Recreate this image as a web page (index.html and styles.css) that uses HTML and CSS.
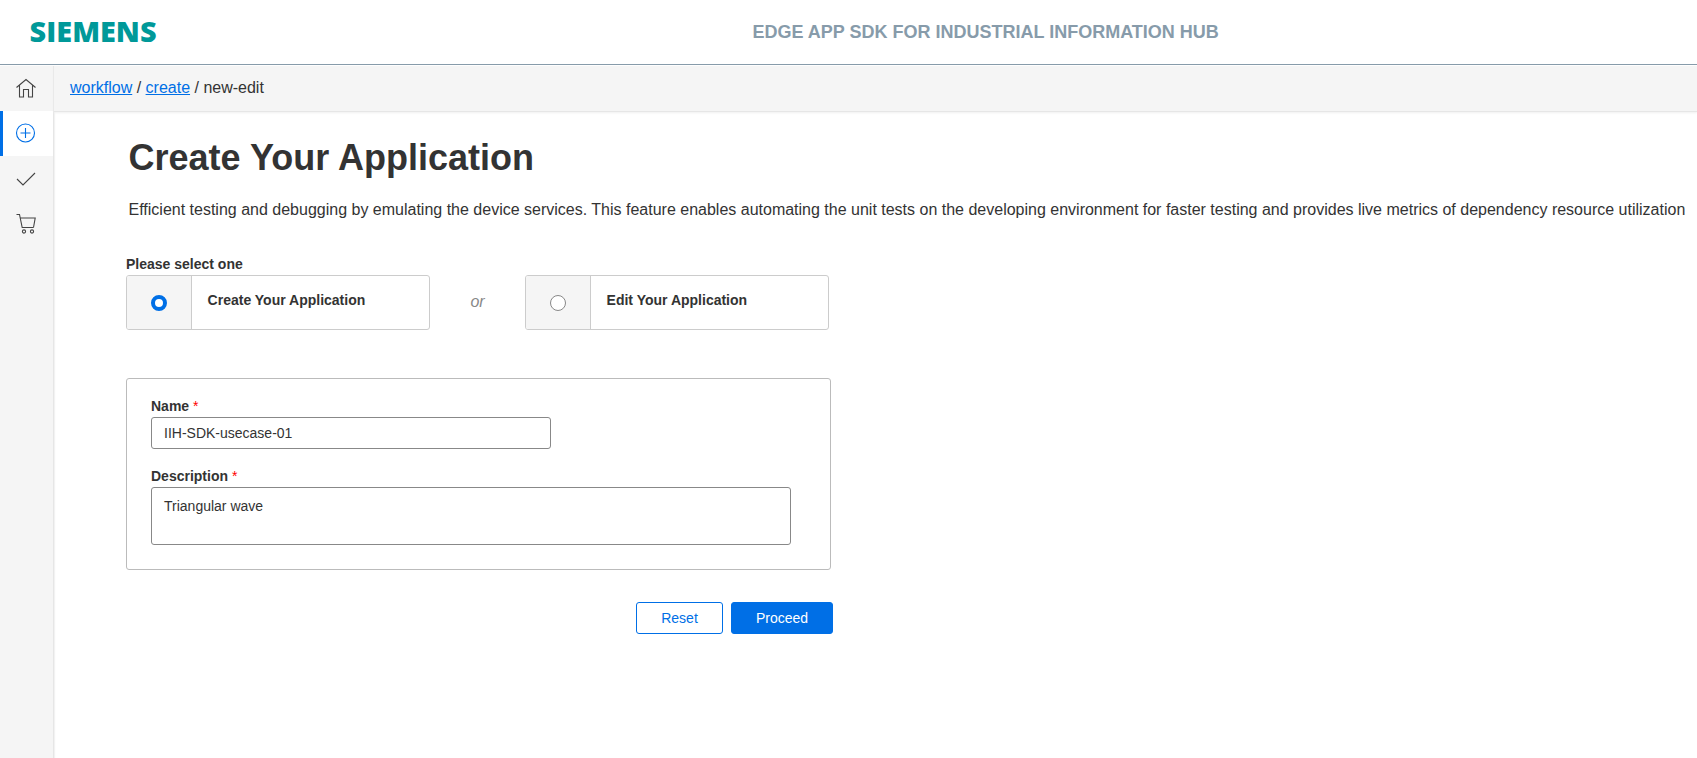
FILE: index.html
```html
<!DOCTYPE html>
<html lang="en">
<head>
<meta charset="utf-8">
<title>Edge App SDK for Industrial Information Hub</title>
<link rel="stylesheet" href="styles.css">
</head>
<body>
<header class="header">
  <svg class="logo" width="130" height="44" viewBox="0 0 130 44"><text class="logo-text" x="0.600" y="32" textLength="127" lengthAdjust="spacingAndGlyphs">SIEMENS</text></svg>
  <div class="header-title">EDGE APP SDK FOR INDUSTRIAL INFORMATION HUB</div>
</header>
<div class="shell">
  <nav class="sidebar">
    <a class="nav-item"><svg class="icon" viewBox="0 0 20 20"><path d="M.5 9.500 10 1.500l9.500 8M3.500 7.500v11.500h4v-7.500h5v7.500h4v-11.500"/></svg></a>
    <a class="nav-item active"><svg class="icon" viewBox="0 0 20 20"><circle cx="9.500" cy="10" r="9"/><path d="M9.500 5v10M4.500 10h10"/></svg></a>
    <a class="nav-item"><svg class="icon" viewBox="0 0 20 20"><path d="M1 11l6 6L19 5"/></svg></a>
    <a class="nav-item"><svg class="icon" viewBox="0 0 20 20"><path d="M.5 1.500h3l2.700 13h11.300M4.200 5h15l-1.700 9.500"/><circle cx="8" cy="18.500" r="1.600"/><circle cx="16" cy="18.500" r="1.600"/></svg></a>
  </nav>
  <main class="main">
    <div class="breadcrumb"><a class="link">workflow</a> / <a class="link">create</a> / new-edit</div>
    <div class="content">
      <h1 class="title">Create Your Application</h1>
      <p class="intro">Efficient testing and debugging by emulating the device services. This feature enables automating the unit tests on the developing environment for faster testing and provides live metrics of dependency resource utilization</p>
      <div class="label">Please select one</div>
      <div class="choices">
        <div class="choice"><div class="choice-mark"><span class="radio checked"></span></div><div class="choice-text">Create Your Application</div></div>
        <div class="or">or</div>
        <div class="choice"><div class="choice-mark"><span class="radio"></span></div><div class="choice-text">Edit Your Application</div></div>
      </div>
      <form class="panel">
        <div class="label">Name <span class="required">*</span></div>
        <input class="field name" value="IIH-SDK-usecase-01">
        <div class="label">Description <span class="required">*</span></div>
        <textarea class="field description">Triangular wave</textarea>
      </form>
      <div class="actions">
        <button class="button">Reset</button>
        <button class="button primary">Proceed</button>
      </div>
    </div>
  </main>
</div>
</body>
</html>
```
FILE: styles.css
```css
* { box-sizing: border-box; }
body {
  margin: 0;
  height: 758px;
  overflow: hidden;
  font: 14px/16px "Liberation Sans", Arial, sans-serif;
  color: #333;
  background: #fff;
}
.header {
  display: flex;
  align-items: center;
  height: 65px;
  padding-left: 29px;
  border-bottom: 1px solid #879baa;
}
.logo { display: block; overflow: visible; }
.logo-text {
  font: 800 28px "Open Sans", "Noto Sans", sans-serif;
  fill: #099;
}
.header-title {
  margin-left: 593.500px;
  font-size: 18px;
  line-height: 20px;
  font-weight: bold;
  color: #879baa;
  white-space: nowrap;
}
.shell { display: flex; height: 692px; margin-top: 1px; }
.sidebar {
  width: 54px;
  flex: none;
  background: #f5f5f5;
  border-right: 1px solid #e6e6e6;
  box-shadow: 1px 0 1px #f2f2f2;
}
.nav-item {
  display: flex;
  align-items: center;
  height: 45px;
  padding: 0 0 2px 16px;
  color: #444;
}
.nav-item.active {
  padding-left: 13px;
  border-left: 3px solid #006fe6;
  background: #fff;
  color: #006fe6;
}
.icon {
  width: 20px;
  height: 20px;
  overflow: visible;
  fill: none;
  stroke: currentColor;
  stroke-width: 1.1;
}
.main { flex: 1; min-width: 0; }
.breadcrumb {
  height: 46px;
  padding: 12px 16px;
  font-size: 16px;
  line-height: 20px;
  background: #f5f5f5;
  border-bottom: 1px solid #e6e6e6;
  box-shadow: 0 1px 2px #f0f0f0;
}
.link { color: #006fe6; text-decoration: underline; }
.content { padding: 25px 0 0 72px; }
.title {
  margin: 0 0 0 2.500px;
  font-size: 36px;
  line-height: 42px;
}
.intro {
  margin: 21px 0 36px 2.500px;
  font-size: 16px;
  line-height: 20px;
  white-space: nowrap;
}
.label { height: 16px; font-weight: bold; }
.choices { display: flex; margin-top: 3px; }
.choice {
  display: flex;
  width: 304px;
  height: 55px;
  border: 1px solid #ccc;
  border-radius: 3px;
  overflow: hidden;
}
.choice-mark {
  width: 65px;
  padding: 19px 0 0 24px;
  background: #f5f5f5;
  border-right: 1px solid #ccc;
}
.radio {
  display: block;
  width: 16px;
  height: 16px;
  border: 1px solid #888;
  border-radius: 50%;
  background: #fff;
}
.radio.checked { border: 4px solid #006fe6; }
.choice-text { padding: 16px 15.600px; font-weight: bold; }
.or {
  width: 95px;
  padding-top: 17px;
  font-size: 16px;
  line-height: 20px;
  font-style: italic;
  text-align: center;
  color: #888;
}
.panel {
  width: 705px;
  height: 192px;
  margin-top: 48px;
  padding: 19px 24px;
  border: 1px solid #bbb;
  border-radius: 3px;
}
.required { font-weight: normal; color: #f00; }
.field {
  display: block;
  margin: 3px 0 0;
  border: 1px solid #888;
  border-radius: 3px;
  font: inherit;
  color: inherit;
  background: #fff;
  resize: none;
  outline: 0;
}
.name { width: 400px; height: 32px; padding: 0 12px; margin-bottom: 19px; }
.description { width: 640px; height: 58px; padding: 10px 12px; }
.actions { display: flex; gap: 8px; width: 707px; justify-content: flex-end; margin-top: 32px; }
.button {
  width: 87px;
  height: 32px;
  padding: 0;
  border: 1px solid #006fe6;
  border-radius: 3px;
  font: inherit;
  color: #006fe6;
  background: #fff;
}
.primary { width: 102px; color: #fff; background: #006fe6; }
```
